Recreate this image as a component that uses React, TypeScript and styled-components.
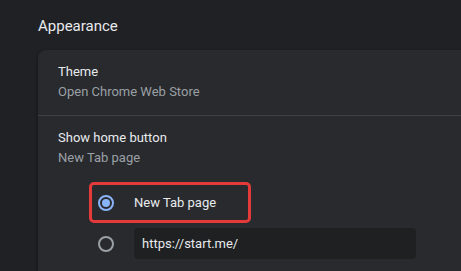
import React from "react";
import styled, { createGlobalStyle } from "styled-components";

const Global = createGlobalStyle`
  html, body {
    margin: 0;
    padding: 0;
    background: #202124;
    overflow: hidden;
  }
  body {
    font-family: Roboto, "Liberation Sans", Arial, sans-serif;
    -webkit-font-smoothing: antialiased;
  }
`;

const Page = styled.div`
  display: flex;
  flex-direction: column;
  padding: 14px 0 0 38px;
  height: 271px;
  box-sizing: border-box;
`;

const SectionTitle = styled.h2`
  margin: 0;
  font-size: 15px;
  font-weight: 400;
  line-height: 24px;
  color: #e8eaed;
  height: 36px;
`;

const Card = styled.div`
  flex: 1;
  background: #292a2d;
  border-radius: 8px 0 0 0;
  box-shadow: 0 1px 2px rgba(0, 0, 0, 0.3), 0 1px 3px 1px rgba(0, 0, 0, 0.15);
`;

const Row = styled.div<{ $divider?: boolean }>`
  display: flex;
  flex-direction: column;
  padding: 12px 20px 13px;
  border-top: ${(p) => (p.$divider ? "1px solid #3f4043" : "none")};
`;

const Primary = styled.div`
  font-size: 13px;
  line-height: 20px;
  color: #e8eaed;
`;

const Secondary = styled.div`
  font-size: 13px;
  line-height: 20px;
  color: #9aa0a6;
`;

const RadioList = styled.div`
  display: flex;
  flex-direction: column;
  margin: 1px 0 0 51px;
`;

const RadioRow = styled.label<{ $highlight?: boolean }>`
  position: relative;
  display: flex;
  align-items: center;
  gap: 20px;
  height: 41px;
  padding-left: 9px;
  box-sizing: border-box;
  width: ${(p) => (p.$highlight ? "162px" : "auto")};

  &::after {
    content: "";
    display: ${(p) => (p.$highlight ? "block" : "none")};
    position: absolute;
    inset: 0;
    border: 3px solid #e53a3a;
    border-radius: 5px;
    pointer-events: none;
  }
`;

const Radio = styled.span<{ $checked?: boolean }>`
  flex: none;
  width: 16px;
  height: 16px;
  box-sizing: border-box;
  border-radius: 50%;
  border: 2px solid ${(p) => (p.$checked ? "#8ab4f8" : "#9aa0a6")};
  display: flex;
  align-items: center;
  justify-content: center;

  &::before {
    content: "";
    display: ${(p) => (p.$checked ? "block" : "none")};
    width: 8px;
    height: 8px;
    border-radius: 50%;
    background: #8ab4f8;
  }
`;

const RadioLabel = styled.span`
  font-size: 13px;
  line-height: 20px;
  color: #e8eaed;
  margin-top: 1px;
`;

const UrlInput = styled.div`
  width: 282px;
  height: 31px;
  box-sizing: border-box;
  background: #1f2022;
  border-radius: 4px;
  padding: 0 8px;
  display: flex;
  align-items: center;
  font-size: 13px;
  color: #e8eaed;
`;

export default function App() {
  return (
    <>
      <Global />
      <Page>
        <SectionTitle>Appearance</SectionTitle>
        <Card>
          <Row>
            <Primary>Theme</Primary>
            <Secondary>Open Chrome Web Store</Secondary>
          </Row>
          <Row $divider>
            <Primary>Show home button</Primary>
            <Secondary>New Tab page</Secondary>
          </Row>
          <RadioList>
            <RadioRow $highlight>
              <Radio $checked />
              <RadioLabel>New Tab page</RadioLabel>
            </RadioRow>
            <RadioRow>
              <Radio />
              <UrlInput>https://start.me/</UrlInput>
            </RadioRow>
          </RadioList>
        </Card>
      </Page>
    </>
  );
}
